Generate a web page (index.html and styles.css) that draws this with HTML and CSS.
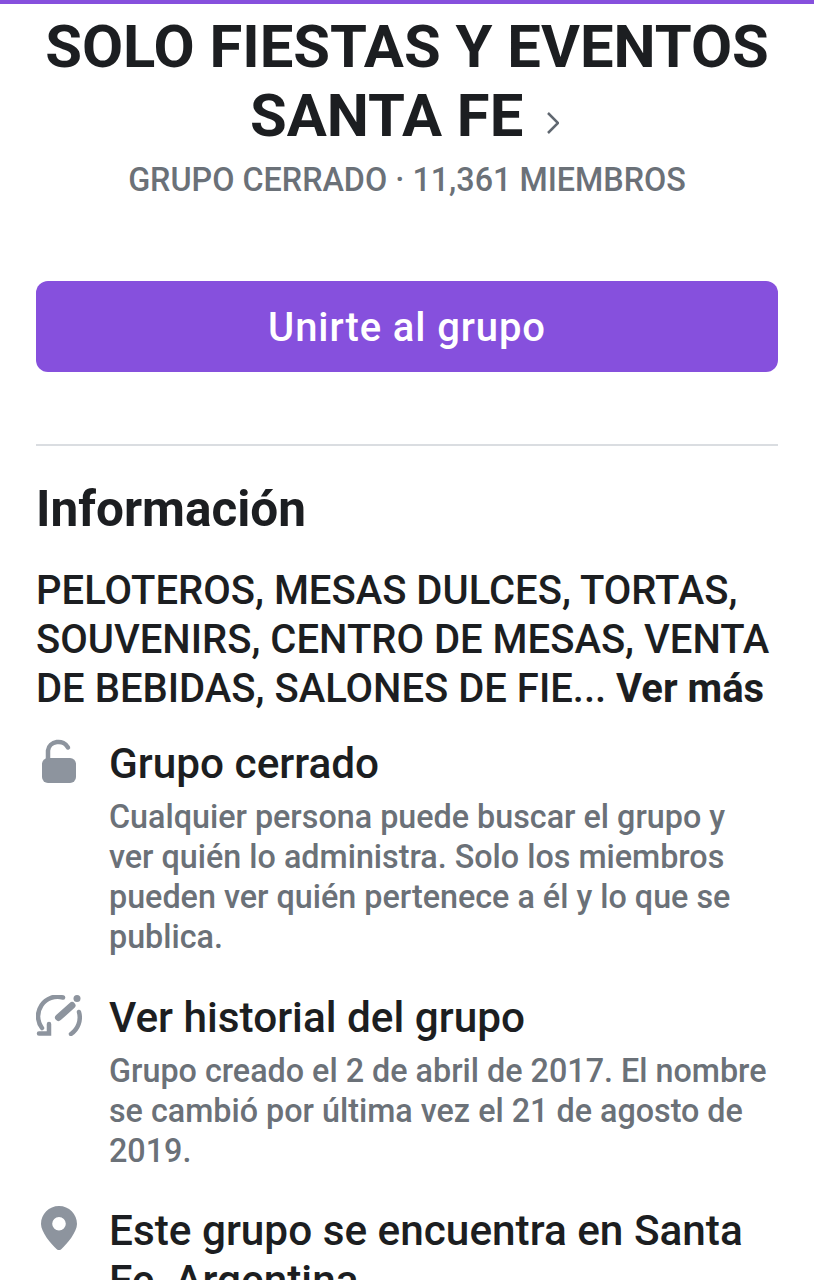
FILE: index.html
```html
<!DOCTYPE html>
<html lang="es">
  <head>
    <meta charset="utf-8">
    <title>Solo Fiestas y Eventos Santa Fe</title>
    <link rel="stylesheet" href="styles.css">
  </head>
  <body>
    <div class="topbar"></div>
    <header class="group-head">
      <h1 class="group-name">SOLO FIESTAS Y EVENTOS<br>SANTA FE
        <svg class="chevron" viewBox="0 0 12 22" width="12" height="22"><path d="M1 1 11 11 1 21"/></svg>
      </h1>
      <p class="group-meta">GRUPO CERRADO · 11,361 MIEMBROS</p>
    </header>
    <div class="join-wrap">
      <a class="join" href="#">Unirte al grupo</a>
    </div>
    <section class="info">
      <h2 class="info-title">Información</h2>
      <p class="info-desc">PELOTEROS, MESAS DULCES, TORTAS, SOUVENIRS, CENTRO DE MESAS, VENTA DE BEBIDAS, SALONES DE FIE... <b>Ver más</b></p>
      <div class="row row-closed">
        <div class="icon-col">
          <svg class="icon" viewBox="0 0 34 44" width="34" height="44"><path class="fill" d="M6 19h22a6 6 0 0 1 6 6v13a6 6 0 0 1-6 6H6a6 6 0 0 1-6-6V25a6 6 0 0 1 6-6z"/><path class="line" d="M6 20v-8.500a10.500 9.500 0 0 1 20-3"/></svg>
        </div>
        <div>
          <h3 class="row-title">Grupo cerrado</h3>
          <p class="row-text">Cualquier persona puede buscar el grupo y ver quién lo administra. Solo los miembros pueden ver quién pertenece a él y lo que se publica.</p>
        </div>
      </div>
      <div class="row row-history">
        <div class="icon-col">
          <svg class="icon" viewBox="0 0 46 41" width="46" height="41"><path class="line" d="M27 2.500A19.500 19.500 0 0 0 6 33"/><path class="line" d="M3 38.500H13V29"/><path class="line" d="M43 17a20 20 0 0 1-8 22"/><path class="line thick" d="M22.500 22.500 36 10.500"/><circle class="fill" cx="41" cy="3.500" r="3.500"/></svg>
        </div>
        <div>
          <h3 class="row-title">Ver historial del grupo</h3>
          <p class="row-text">Grupo creado el 2 de abril de 2017. El nombre se cambió por última vez el 21 de agosto de 2019.</p>
        </div>
      </div>
      <div class="row row-place">
        <div class="icon-col">
          <svg class="icon" viewBox="0 0 36 44" width="36" height="44"><path class="fill" fill-rule="evenodd" d="M18 0C8 0 0 8 0 18c0 8 10 20 15.500 25a3.500 3.500 0 0 0 5 0C26 38 36 26 36 18 36 8 28 0 18 0zm0 11a6.800 6.800 0 1 1 0 13.600 6.800 6.800 0 0 1 0-13.600z"/></svg>
        </div>
        <div>
          <h3 class="row-title">Este grupo se encuentra en Santa Fe, Argentina</h3>
        </div>
      </div>
    </section>
  </body>
</html>
```

FILE: styles.css
```css
html, body { margin: 0; padding: 0; }
body {
  width: 814px;
  height: 1280px;
  overflow: hidden;
  background: #fff;
  color: #1c1e21;
  font-family: Roboto, "Liberation Sans", sans-serif;
}
h1, h2, h3, p { margin: 0; }

.topbar { height: 4px; background: #8650dd; }

.group-head { text-align: center; padding-top: 9px; }
.group-name { font-size: 59.7px; line-height: 69px; font-weight: 700; }
.chevron { fill: none; stroke: #606770; stroke-width: 2.500; margin: 0 5px 0 9px; vertical-align: 2px; }
.group-meta { margin-top: 9px; font-size: 32.3px; line-height: 40px; font-weight: 500; color: #6b7178; }

.join-wrap { margin: 81px 36px 0; padding-bottom: 72px; border-bottom: 2px solid #dadde1; }
.join {
  display: block;
  height: 91px;
  line-height: 93px;
  border-radius: 12px;
  background: #8650dd;
  color: #fff;
  font-size: 40px;
  font-weight: 500;
  letter-spacing: 0.9px;
  text-align: center;
  text-decoration: none;
}

.info { padding: 0 36px; }
.info-title { margin-top: 33px; font-size: 49.5px; line-height: 60px; font-weight: 700; }
.info-desc { margin-top: 27px; font-size: 40px; line-height: 49px; font-weight: 500; }
.info-desc b { font-weight: 700; }

.row { display: flex; }
.row-closed { margin-top: 26px; }
.row-history { margin-top: 36px; }
.row-place { margin-top: 35px; }
.row-title { font-size: 42.3px; line-height: 50px; font-weight: 500; }
.row-text { margin-top: 8px; max-width: 665px; font-size: 32.3px; line-height: 40px; font-weight: 500; color: #6b7178; }

.icon-col { flex: none; width: 73px; }
.icon { display: block; }
.row-closed .icon { margin: 0 0 0 6px; }
.row-history .icon { margin: 2px 0 0; }
.row-place .icon { margin: 0 0 0 5px; }
.icon .fill { fill: #8d949e; }
.icon .line { fill: none; stroke: #8d949e; stroke-width: 4.500; stroke-linecap: round; }
.icon .thick { stroke-width: 7; }
```
